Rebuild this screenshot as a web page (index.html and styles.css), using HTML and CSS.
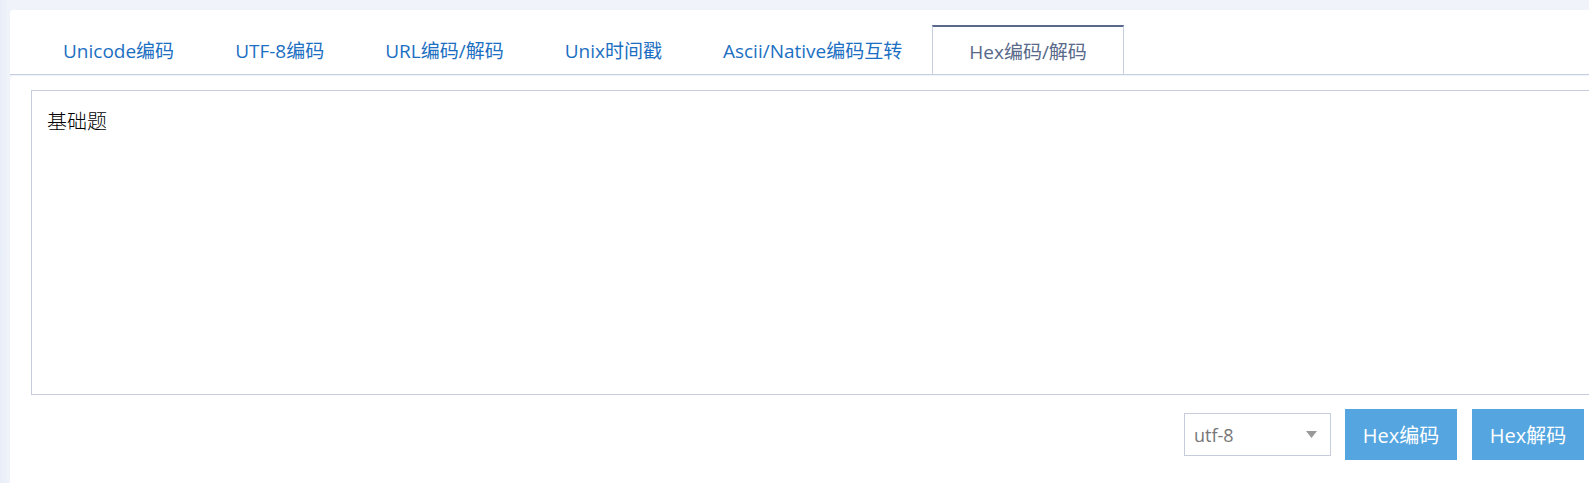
FILE: index.html
```html
<!DOCTYPE html>
<html lang="zh-CN">
<head>
<meta charset="utf-8">
<title>Hex编码/解码</title>
<link rel="stylesheet" href="styles.css">
</head>
<body>
<div class="page">
  <div class="card">
    <div class="tabs">
      <a class="tab">Unicode编码</a>
      <a class="tab">UTF-8编码</a>
      <a class="tab">URL编码/解码</a>
      <a class="tab">Unix时间戳</a>
      <a class="tab">Ascii/Native编码互转</a>
      <a class="tab tab-active">Hex编码/解码</a>
    </div>
    <div class="panel">
      <div class="editor">基础题</div>
      <div class="controls">
        <div class="select">
          <span>utf-8</span>
          <svg class="caret" width="11" height="7" viewBox="0 0 11 7"><path d="M0 0H11L5.5 7Z" fill="#999"/></svg>
        </div>
        <button class="btn">Hex编码</button>
        <button class="btn">Hex解码</button>
      </div>
    </div>
  </div>
</div>
</body>
</html>
```

FILE: styles.css
```css
html, body {
  margin: 0;
  padding: 0;
}
body {
  background: #edf2f9;
  overflow: hidden;
  font-family: "Open Sans", "Noto Sans CJK SC", sans-serif;
}
.page {
  padding: 10px 0 0 10px;
  width: 1640px;
  height: 473px;
  background: linear-gradient(90deg, #e8eef8 0, #f0f4fa 10px);
}
.card {
  width: 1620px;
  height: 473px;
  display: flex;
  flex-direction: column;
}
.tabs {
  display: flex;
  align-items: flex-end;
  height: 65px;
  padding-left: 22px;
  background: #fff;
  border-bottom: 1px solid #c5cfe0;
  border-radius: 4px 4px 0 0;
  box-sizing: border-box;
}
.tab {
  height: 48px;
  display: flex;
  align-items: center;
  padding: 0 30px 0 31px;
  font-size: 19px;
  color: #1c6fc2;
  white-space: nowrap;
  box-sizing: border-box;
}
.tab-active {
  height: 50px;
  margin-bottom: -1px;
  padding: 0 36px;
  color: #58698a;
  border-top: 2px solid #58698a;
  border-left: 1px solid #c5cfe0;
  border-right: 1px solid #c5cfe0;
  border-bottom: 1px solid #c5cfe0;
}
.panel {
  flex: 1;
  margin-top: 1px;
  background: #fff;
  border-radius: 4px 4px 0 0;
  padding: 14px 21px 0 21px;
}
.editor {
  height: 305px;
  box-sizing: border-box;
  border: 1px solid #c5cddc;
  padding: 15px 15px;
  font-size: 20px;
  line-height: 30px;
  font-weight: 300;
  color: #000;
  font-family: "Noto Sans CJK SC", sans-serif;
}
.controls {
  display: flex;
  justify-content: flex-end;
  align-items: center;
  gap: 15px;
  padding-right: 25px;
  margin-top: 14px;
}
.select {
  width: 147px;
  height: 43px;
  box-sizing: border-box;
  border: 1px solid #c5cddc;
  display: flex;
  align-items: center;
  justify-content: space-between;
  padding: 0 13px 0 9px;
  font-size: 18px;
  color: #777;
  margin-right: -1px;
}
.caret {
  display: block;
}
.btn {
  width: 112px;
  height: 51px;
  border: none;
  background: #55a6e0;
  color: #fff;
  font-size: 20px;
  font-family: "Open Sans", "Noto Sans CJK SC", sans-serif;
  padding: 0;
}
```
